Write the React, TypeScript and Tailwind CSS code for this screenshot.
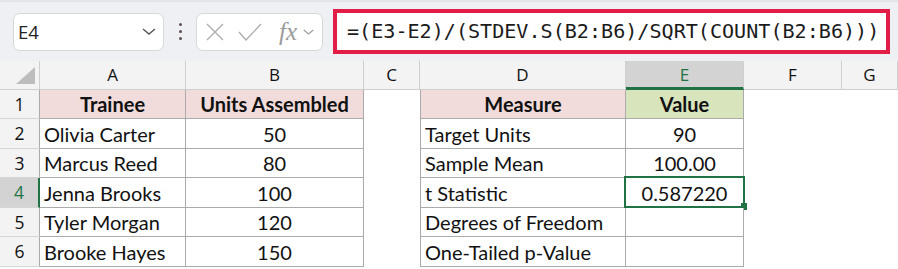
import React from "react";

const trainees: [string, string][] = [
  ["Olivia Carter", "50"],
  ["Marcus Reed", "80"],
  ["Jenna Brooks", "100"],
  ["Tyler Morgan", "120"],
  ["Brooke Hayes", "150"],
];

const measures: [string, string][] = [
  ["Target Units", "90"],
  ["Sample Mean", "100.00"],
  ["t Statistic", "0.587220"],
  ["Degrees of Freedom", ""],
  ["One-Tailed p-Value", ""],
];

const columns = ["A", "B", "C", "D", "E", "F", "G"];
const rowHeights = ["h-[29px]", "h-[30px]", "h-[29px]", "h-[30px]", "h-[29px]", "h-[30px]"];

const cellFont = "font-['Lato',sans-serif] text-[20px] text-[#111]";
const line = "border-[#ababab]";

function Chevron({ className }: { className: string }) {
  return (
    <svg viewBox="0 0 14 7" className={className} fill="none" stroke="currentColor" strokeWidth={1.4}>
      <path d="M1 1l6 5 6-5" />
    </svg>
  );
}

function FormulaBar() {
  return (
    <div className="flex h-[61px] items-center border-t-2 border-[#e2e5e9] bg-[#eef0f3]">
      <div className="ml-[13px] flex h-[38px] w-[151px] items-center justify-between rounded-[7px] border border-[#d6d8db] bg-white pl-[4px] pr-[7px]">
        <span className="font-['Open_Sans',sans-serif] text-[18.5px] text-[#222]">E4</span>
        <Chevron className="h-[7px] w-[14px] text-[#555]" />
      </div>
      <div className="ml-[15px] flex flex-col gap-[4px]">
        <span className="h-[3px] w-[3px] rounded-full bg-[#5b5050]" />
        <span className="h-[3px] w-[3px] rounded-full bg-[#5b5050]" />
        <span className="h-[3px] w-[3px] rounded-full bg-[#5b5050]" />
      </div>
      <div className="ml-[14px] flex h-[38px] w-[127px] items-center rounded-[7px] border border-[#d6d8db] bg-white">
        <svg viewBox="0 0 18 18" className="ml-[9px] h-[18px] w-[18px] text-[#ababab]" fill="none" stroke="currentColor" strokeWidth={1.3}>
          <path d="M1 1l16 16M17 1L1 17" />
        </svg>
        <svg viewBox="0 0 24 18" className="ml-[14px] h-[18px] w-[24px] text-[#ababab]" fill="none" stroke="currentColor" strokeWidth={1.3}>
          <path d="M1 9l7 8L23 1" />
        </svg>
        <span className="ml-[17px] font-['Liberation_Serif',serif] text-[25px] italic leading-none text-[#9a9a9a]">fx</span>
        <Chevron className="ml-[6px] h-[6px] w-[11px] text-[#9a9a9a]" />
      </div>
      <div className="ml-[10px] flex h-[45px] w-[557px] items-center border-4 border-[#e11d48] bg-white pl-[10px]">
        <span className="font-['DejaVu_Sans_Mono',monospace] text-[20.1px] text-[#1b1b1b]">
          =(E3-E2)/(STDEV.S(B2:B6)/SQRT(COUNT(B2:B6)))
        </span>
      </div>
    </div>
  );
}

function ColumnHeaders() {
  return (
    <>
      <div className="relative h-[29px] border-r border-b border-[#cfcfcf] bg-[#f3f3f3]">
        <svg viewBox="0 0 19 17" className="absolute bottom-[5px] right-[4px] h-[17px] w-[19px]">
          <path d="M19 0v17H0z" fill="#bdbdbd" />
        </svg>
      </div>
      {columns.map((c) => {
        const active = c === "E";
        return (
          <div
            key={c}
            className={
              active
                ? "flex h-[29px] items-center justify-center border-r border-b-[3px] border-r-[#cfcfcf] border-b-[#217346] bg-[#d3d3d3] pt-[2px] font-['Open_Sans',sans-serif] text-[17px] text-[#217346]"
                : "flex h-[29px] items-center justify-center border-r border-b border-[#cfcfcf] bg-[#f3f3f3] font-['Open_Sans',sans-serif] text-[17px] text-[#111]"
            }
          >
            {c}
          </div>
        );
      })}
    </>
  );
}

function RowHeader({ n, h }: { n: number; h: string }) {
  const active = n === 4;
  return (
    <div
      className={
        active
          ? `${h} flex items-center justify-center border-r-2 border-b border-r-[#217346] border-b-[#d6d6d6] bg-[#d3d3d3] font-['Open_Sans',sans-serif] text-[17.5px] text-[#217346]`
          : `${h} flex items-center justify-center border-r border-b border-r-[#ababab] border-b-[#d6d6d6] bg-[#f3f3f3] font-['Open_Sans',sans-serif] text-[17.5px] text-[#111]`
      }
    >
      {n}
    </div>
  );
}

function Cell({
  h,
  children,
  align,
  first,
  bg,
  bold,
  selected,
}: {
  h: string;
  children?: React.ReactNode;
  align: "left" | "center";
  first?: boolean;
  bg?: string;
  bold?: boolean;
  selected?: boolean;
}) {
  return (
    <div
      className={`${h} relative flex items-center border-r border-b ${line} ${first ? "border-l" : ""} ${
        align === "left" ? "justify-start pl-[4px]" : "justify-center"
      } ${bg ?? "bg-white"} ${bold ? "font-bold" : ""} ${cellFont}`}
    >
      {children}
      {selected && (
        <>
          <div className="pointer-events-none absolute -top-[2px] -bottom-[1px] -left-[2px] -right-[2px] border-2 border-[#217346]" />
          <div className="absolute -right-[4px] -bottom-[3px] h-[7px] w-[6px] bg-[#217346]" />
        </>
      )}
    </div>
  );
}

export default function App() {
  return (
    <div className="h-[269px] w-[898px] overflow-hidden bg-white">
      <FormulaBar />
      <div className="grid grid-cols-[40px_146px_178px_56px_206px_118px_98px_56px]">
        <ColumnHeaders />
        {rowHeights.map((h, i) => {
          const row = i + 1;
          const header = row === 1;
          const t = trainees[i - 1];
          const m = measures[i - 1];
          return (
            <React.Fragment key={row}>
              <RowHeader n={row} h={h} />
              <Cell h={h} align={header ? "center" : "left"} bg={header ? "bg-[#f2dcdb]" : undefined} bold={header}>
                {header ? "Trainee" : t[0]}
              </Cell>
              <Cell h={h} align="center" bg={header ? "bg-[#f2dcdb]" : undefined} bold={header}>
                {header ? "Units Assembled" : t[1]}
              </Cell>
              <div className={`${h} bg-white`} />
              <Cell h={h} align={header ? "center" : "left"} first bg={header ? "bg-[#f2dcdb]" : undefined} bold={header}>
                {header ? "Measure" : m[0]}
              </Cell>
              <Cell h={h} align="center" bg={header ? "bg-[#d8e4bc]" : undefined} bold={header} selected={row === 4}>
                {header ? "Value" : m[1]}
              </Cell>
              <div className={`${h} bg-white`} />
              <div className={`${h} bg-white`} />
            </React.Fragment>
          );
        })}
      </div>
    </div>
  );
}
